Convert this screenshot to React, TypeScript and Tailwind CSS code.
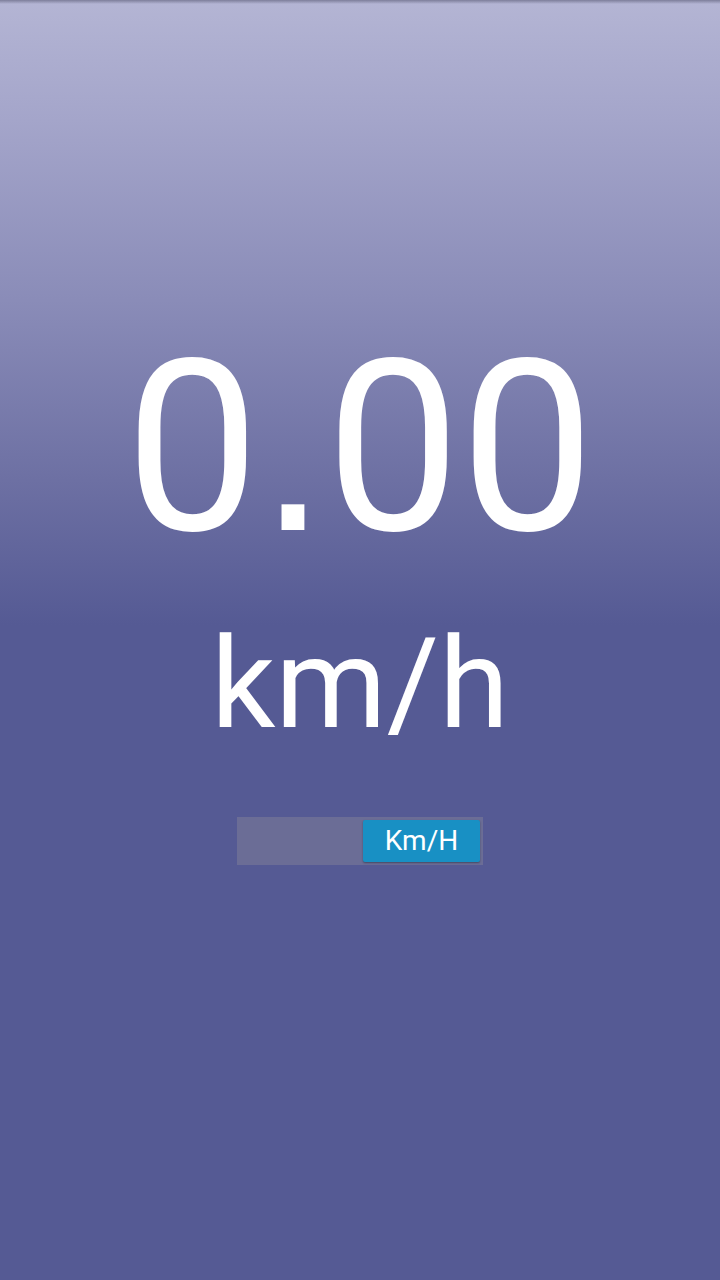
import React from "react";

export default function App() {
  return (
    <div
      className="relative w-[720px] h-[1280px] overflow-hidden flex flex-col items-center bg-[linear-gradient(to_bottom,#b4b5d4_0px,#a4a5ca_120px,#8a8cb8_300px,#6d70a3_480px,#555a94_625px,#555a94_1280px)]"
      style={{ fontFamily: "Roboto, 'Noto Sans', sans-serif" }}
    >
      <div className="absolute top-0 left-0 w-full h-[4px] bg-[linear-gradient(to_bottom,#7d7e9a,#b4b5d400)]" />
      <div className="mt-[328px] text-white text-[239px] leading-none">
        0<span style={{ fontFamily: "'Liberation Sans', sans-serif" }}>.</span>00
      </div>
      <div className="mt-[52px] text-white text-[127px] leading-none">km/h</div>
      <div className="mt-[70px] w-[246px] h-[48px] bg-[#6b6d96] flex justify-end items-start pt-[3px] pr-[3px]">
        <div className="w-[117px] h-[42px] bg-[#1890c4] rounded-[2px] shadow-[0_1px_2px_rgba(0,0,0,0.35)] flex items-center justify-center text-white text-[28px] leading-none">
          Km/H
        </div>
      </div>
    </div>
  );
}
